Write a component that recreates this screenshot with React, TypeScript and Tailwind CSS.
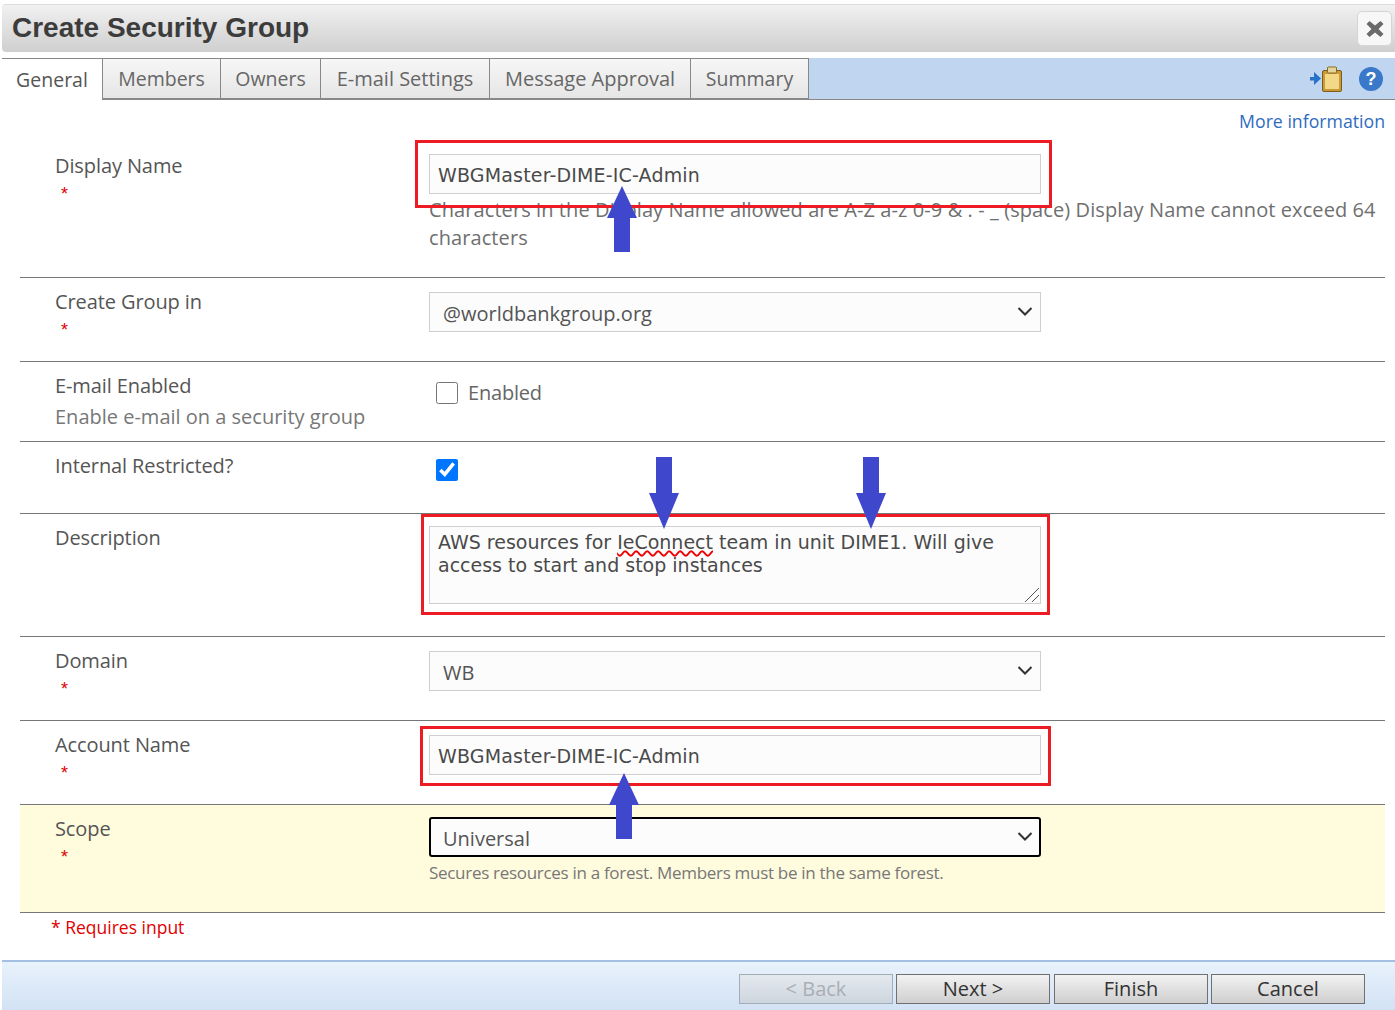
import React from 'react';

const sans = "font-['Open_Sans','Noto_Sans',sans-serif]";

const Star = () => <div className="text-[#e00000] text-[18px] leading-[20px] pl-[6px] pt-[4px] font-['Liberation_Sans',sans-serif]">*</div>;

const Chevron = () => (
  <svg className="absolute right-[8px] top-[13px] pointer-events-none" width="16" height="12" viewBox="0 0 16 12" fill="none">
    <path d="M1.5 3 L8 9.5 L14.5 3" stroke="#333" strokeWidth="2" />
  </svg>
);

const TextInput = ({ value }: { value: string }) => (
  <input
    readOnly
    value={value}
    className="w-[612px] h-[40px] border border-[#cfcfcf] bg-[#fcfcfc] pl-[8px] pt-[1px] text-[#4a4a4a] text-[19px] font-['DejaVu_Sans',sans-serif] tracking-[0.17px] outline-none"
  />
);

const Select = ({ value, focus }: { value: string; focus?: boolean }) => (
  <div className="relative w-[612px] h-[40px]">
    <select
      defaultValue={value}
      className={`appearance-none w-full h-full bg-[#fcfcfc] pt-[4px] text-[#555] text-[20px] ${sans} outline-none ${focus ? 'pl-[12px] border-2 border-black rounded-[3px]' : 'pl-[13px] border border-[#cfcfcf]'}`}
    >
      <option>{value}</option>
    </select>
    <Chevron />
  </div>
);

const Row = ({ h, label, required, sub, children, cls = '' }: { h: number; label: string; required?: boolean; sub?: string; children?: React.ReactNode; cls?: string }) => (
  <div className={`flex border-b border-[#777] ${cls}`} style={{ height: h }}>
    <div className="w-[409px] shrink-0 pl-[35px]">
      <div className="text-[#555] text-[20px] leading-[28px] tracking-[-0.1px]">{label}</div>
      {required && <Star />}
      {sub && <div className="text-[#777] text-[20px] leading-[28px] mt-[3px]">{sub}</div>}
    </div>
    <div className="flex-1 min-w-0">{children}</div>
  </div>
);

const Tab = ({ label, w, active, wide }: { label: string; w: number; active?: boolean; wide?: boolean }) => (
  <div
    style={{ width: w }}
    className={`h-[42px] flex items-center justify-center border-t border-[#888] ${wide ? 'text-[20px]' : 'text-[19.5px]'} ${
      active
        ? 'bg-white text-[#555]'
        : 'border-l border-b-2 bg-gradient-to-b from-[#f6f6f6] to-[#e6e6e6] text-[#666]'
    }`}
  >
    {label}
  </div>
);

const Btn = ({ label, disabled, cls = '' }: { label: string; disabled?: boolean; cls?: string }) => (
  <button
    className={`w-[154px] h-[30px] border text-[20px] leading-[28px] bg-gradient-to-b ${cls} ${
      disabled
        ? 'border-[#a3adb8] from-[#e4e9ee] to-[#cdd5de] text-[#a9aeb5]'
        : 'border-[#707070] from-[#f2f2f2] to-[#cfcfcf] text-[#333]'
    }`}
  >
    {label}
  </button>
);

const RedBox = ({ cls }: { cls: string }) => <div className={`absolute border-[3px] border-[#ed1c24] pointer-events-none ${cls}`} />;

const Arrow = ({ cls, down }: { cls: string; down?: boolean }) => (
  <svg className={`absolute pointer-events-none ${cls}`} width="32" height="72" viewBox="0 0 32 72">
    <polygon
      fill="#3f48cc"
      points={down ? '8,0 24,0 24,36 31,36 16,72 1,36 8,36' : '16,0 31,32 24,32 24,66 8,66 8,32 1,32'}
    />
  </svg>
);

export default function App() {
  return (
    <div className={`relative w-[1395px] h-[1010px] overflow-hidden bg-white ${sans}`}>
      <div className="pt-[4px] pl-[2px]">
        <div className="h-[48px] flex items-center justify-between rounded-l-[4px] border-t border-[#dcdcdc] bg-gradient-to-b from-[#f1f1f1] to-[#cfcfcf] pl-[10px] pr-[3px]">
          <div className="text-[#3c3c3c] text-[28px] font-bold pb-[2px] font-['Liberation_Sans',sans-serif]">Create Security Group</div>
          <div className="w-[35px] h-[35px] rounded-[5px] border border-[#d5d5d5] bg-[#f7f7f7] flex items-center justify-center">
            <svg width="18" height="18" viewBox="0 0 18 18">
              <path d="M3.500 1 L9 5.500 L14.500 1 L17.500 4 L12.500 9 L17.500 14 L14.500 17 L9 12.500 L3.500 17 L0.500 14 L5.500 9 L0.500 4 Z" fill="#6a6a6a" />
            </svg>
          </div>
        </div>

        <div className="mt-[6px] h-[42px] flex items-stretch bg-[#c0d6f0] border-b border-[#888]">
          <Tab label="General" w={100} active />
          <Tab label="Members" w={118} />
          <Tab label="Owners" w={100} />
          <Tab label="E-mail Settings" w={169} wide />
          <Tab label="Message Approval" w={201} wide />
          <div className="border-r border-[#888] flex"><Tab label="Summary" w={118} /></div>
          <div className="ml-auto flex items-center gap-[17px] pr-[12px]">
            <svg width="32" height="26" viewBox="0 0 32 26">
              <path d="M0 11 H4 V6 L11 12.500 L4 19 V14.500 H0 Z" fill="#2a72c8" />
              <rect x="12.500" y="4.500" width="19" height="21" rx="1.500" fill="#c99a35" stroke="#7a5d1c" />
              <rect x="15" y="8" width="14" height="15" fill="#f3d987" />
              <rect x="17.500" y="1" width="9" height="6" rx="1" fill="#e4d49a" stroke="#8a6a20" />
            </svg>
            <div className="w-[24px] h-[24px] rounded-full bg-[#3a78c9] text-white text-[18px] font-bold flex items-center justify-center leading-none font-['Liberation_Sans',sans-serif]">?</div>
          </div>
        </div>
      </div>

      <div className="h-[41px] pr-[10px] pt-[7px] text-right text-[#2f6bbf] text-[17.7px] leading-[28px]">More information</div>

      <div className="ml-[20px] mr-[10px]">
        <Row h={137} label="Display Name" required cls="pt-[11px]">
          <div className="pt-[2px]">
            <TextInput value="WBGMaster-DIME-IC-Admin" />
            <div className="text-[#6f6f6f] text-[20px] leading-[28px] mt-[2px] tracking-[0.09px]">Characters in the Display Name allowed are A-Z a-z 0-9 &amp; . - _ (space) Display Name cannot exceed 64 characters</div>
          </div>
        </Row>
        <Row h={84} label="Create Group in" required cls="pt-[10px]">
          <div className="pt-[4px]"><Select value="@worldbankgroup.org" /></div>
        </Row>
        <Row h={80} label="E-mail Enabled" sub="Enable e-mail on a security group" cls="pt-[10px]">
          <label className="flex items-center gap-[10px] pl-[7px] pt-[7px] text-[#666] text-[20px] leading-[28px] tracking-[-0.2px]">
            <input type="checkbox" className="w-[22px] h-[22px]" />
            Enabled
          </label>
        </Row>
        <Row h={72} label="Internal Restricted?" cls="pt-[10px]">
          <div className="pl-[7px] pt-[7px]">
            <input type="checkbox" defaultChecked className="w-[22px] h-[22px] accent-[#0075ff]" />
          </div>
        </Row>
        <Row h={123} label="Description" cls="pt-[10px]">
          <div className="relative w-[612px] h-[78px] mt-[2px] border border-[#cfcfcf] bg-[#fcfcfc] pl-[8px] pt-[4px] text-[#4a4a4a] text-[19px] leading-[23px] font-['DejaVu_Sans',sans-serif]">
            AWS resources for <span className="underline decoration-wavy decoration-[#f00000] decoration-[1.5px]">IeConnect</span> team in unit DIME1. Will give access to start and stop instances
            <svg className="absolute right-0 bottom-0" width="16" height="16" viewBox="0 0 16 16">
              <path d="M1 15 L15 1 M8 15 L15 8" stroke="#555" strokeWidth="1" />
            </svg>
          </div>
        </Row>
        <Row h={84} label="Domain" required cls="pt-[10px]">
          <div className="pt-[4px]"><Select value="WB" /></div>
        </Row>
        <Row h={84} label="Account Name" required cls="pt-[10px]">
          <div className="pt-[4px]"><TextInput value="WBGMaster-DIME-IC-Admin" /></div>
        </Row>
        <Row h={108} label="Scope" required cls="pt-[10px] bg-[#fffbdd]">
          <div className="pt-[2px]">
            <Select value="Universal" focus />
            <div className="text-[#777] text-[17px] leading-[24px] mt-[4px] tracking-[-0.3px]">Secures resources in a forest. Members must be in the same forest.</div>
          </div>
        </Row>
      </div>

      <div className="pl-[51px] text-[#e00000] text-[17.5px] leading-[28px]">* Requires input</div>

      <div className="absolute left-[2px] right-0 top-[960px] h-[50px] border-t-2 border-[#a4bfe2] bg-gradient-to-b from-[#e8f2fc] to-[#d2e2f4] flex justify-end items-start gap-[3px] pt-[12px] pr-[30px]">
        <Btn label="< Back" disabled />
        <Btn label="Next >" />
        <Btn label="Finish" cls="ml-[1px]" />
        <Btn label="Cancel" />
      </div>

      <RedBox cls="left-[415px] top-[140px] w-[637px] h-[68px]" />
      <RedBox cls="left-[421px] top-[514px] w-[629px] h-[101px]" />
      <RedBox cls="left-[420px] top-[726px] w-[631px] h-[60px]" />

      <Arrow cls="left-[606px] top-[186px]" />
      <Arrow down cls="left-[648px] top-[457px]" />
      <Arrow down cls="left-[855px] top-[457px]" />
      <Arrow cls="left-[608px] top-[773px]" />
    </div>
  );
}
